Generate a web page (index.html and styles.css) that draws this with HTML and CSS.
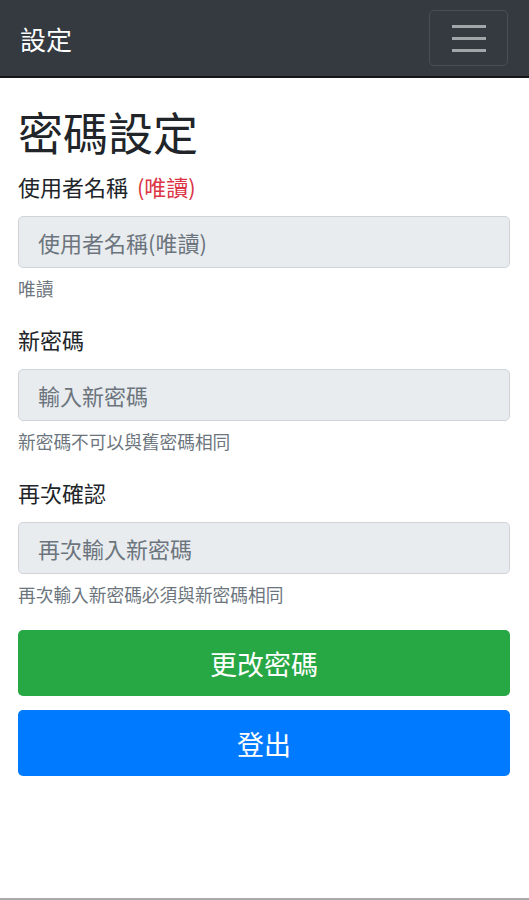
FILE: index.html
```html
<!DOCTYPE html>
<html>
<head>
  <meta charset="UTF-8">
  <title>設定</title>
  <link rel="stylesheet" href="styles.css">
</head>
<body>

<nav class="navbar">
  <span class="brand">設定</span>
  <button class="toggler">
    <span></span><span></span><span></span>
  </button>
</nav>

<div class="container">
  <h1>密碼設定</h1>

  <div class="formGroup">
    <label>使用者名稱 <span class="readonly">(唯讀)</span></label>
    <input type="text" placeholder="使用者名稱(唯讀)" readonly>
    <small>唯讀</small>
  </div>

  <div class="formGroup">
    <label>新密碼</label>
    <input type="password" placeholder="輸入新密碼">
    <small>新密碼不可以與舊密碼相同</small>
  </div>

  <div class="formGroup">
    <label>再次確認</label>
    <input type="password" placeholder="再次輸入新密碼">
    <small>再次輸入新密碼必須與新密碼相同</small>
  </div>

  <button class="btn btnSuccess">更改密碼</button>
  <button class="btn btnPrimary">登出</button>
</div>

<footer></footer>

</body>
</html>
```

FILE: styles.css
```css
body {
  margin: 0;
  background: #fff;
  color: #212529;
  font-family: "Noto Sans CJK TC", "Noto Sans", sans-serif;
  height: 900px;
  box-sizing: border-box;
  border-bottom: 2px solid #aaa;
}

.navbar {
  height: 76px;
  background: #343a40;
  border-bottom: 2px solid #141618;
  display: flex;
  align-items: center;
  justify-content: space-between;
  padding: 0 21px 0 20px;
}

.brand {
  color: #fff;
  font-size: 26px;
}

.toggler {
  width: 79px;
  height: 56px;
  background: transparent;
  border: 1px solid rgba(255, 255, 255, 0.1);
  border-radius: 5px;
  display: flex;
  flex-direction: column;
  align-items: center;
  justify-content: center;
  gap: 9px;
  padding: 0;
}

.toggler span {
  width: 34px;
  height: 3px;
  background: rgba(255, 255, 255, 0.55);
}

.container {
  padding: 0 19px 0 18px;
}

h1 {
  font-size: 45px;
  font-weight: 400;
  line-height: 52px;
  margin: 28px 0 13px;
}

.formGroup {
  margin-bottom: 25px;
}

label {
  display: block;
  font-size: 22px;
  line-height: 30px;
  margin-bottom: 15px;
}

.readonly {
  color: #dc3545;
  margin-left: 4px;
}

input {
  display: block;
  width: 100%;
  box-sizing: border-box;
  height: 52px;
  padding: 0 19px;
  font-family: inherit;
  font-size: 22px;
  background: #e9ecef;
  border: 1px solid #ced4da;
  border-radius: 5px;
  color: #495057;
}

input::placeholder {
  color: #6c757d;
}

small {
  display: block;
  font-size: 17.7px;
  line-height: 22px;
  margin-top: 9px;
  color: #6c757d;
}

.btn {
  display: block;
  width: 100%;
  height: 66px;
  border: none;
  border-radius: 5px;
  color: #fff;
  font-family: inherit;
  font-size: 27px;
  margin-bottom: 14px;
}

.btnSuccess {
  background: #28a745;
}

.btnPrimary {
  background: #007bff;
}
```
